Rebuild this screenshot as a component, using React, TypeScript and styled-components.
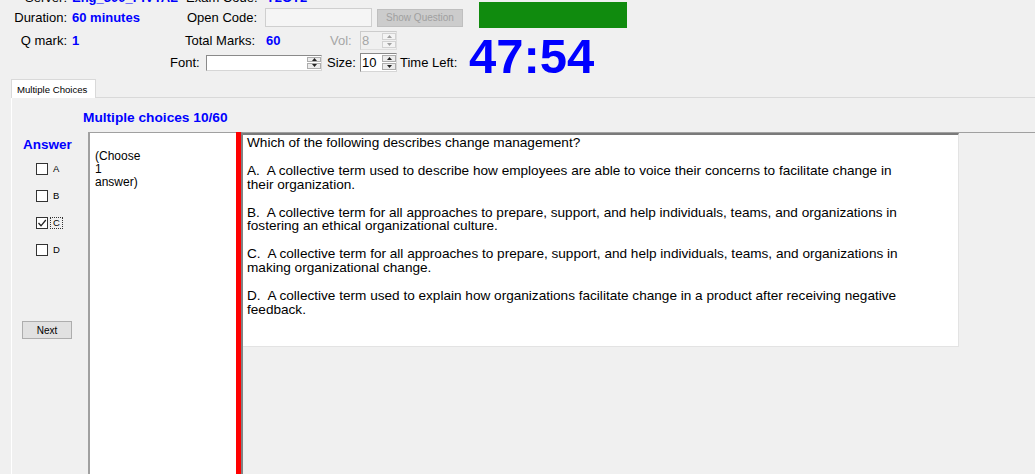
import React from "react";
import styled, { createGlobalStyle } from "styled-components";

const Global = createGlobalStyle`
  html, body { margin: 0; padding: 0; background: #f0f0f0; overflow: hidden; }
  body { font-family: "Liberation Sans", Arial, sans-serif; color: #000; }
  #root { width: 1035px; height: 474px; overflow: hidden; }
`;

const Page = styled.div`
  width: 1035px;
  height: 474px;
  display: flex;
  flex-direction: column;
  overflow: hidden;
  background: #f0f0f0;
`;

const Header = styled.header`
  margin-top: -10px;
  display: flex;
  flex-direction: column;
  flex-shrink: 0;
`;

const Row = styled.div<{ $h: number; $pl?: number }>`
  display: flex;
  align-items: center;
  height: ${(p) => p.$h}px;
  padding-left: ${(p) => p.$pl ?? 0}px;
  flex-shrink: 0;
`;

const Label = styled.span<{ $w?: number; $right?: boolean; $muted?: boolean; $ml?: number }>`
  font-size: 13px;
  white-space: nowrap;
  flex-shrink: 0;
  box-sizing: border-box;
  width: ${(p) => (p.$w ? `${p.$w}px` : "auto")};
  text-align: ${(p) => (p.$right ? "right" : "left")};
  padding-right: ${(p) => (p.$right ? 5 : 0)}px;
  margin-left: ${(p) => p.$ml ?? 0}px;
  color: ${(p) => (p.$muted ? "#a6a6a6" : "#000")};
`;

const Value = styled.span<{ $w: number }>`
  font-size: 13px;
  font-weight: bold;
  color: #0000ff;
  white-space: nowrap;
  width: ${(p) => p.$w}px;
  flex-shrink: 0;
  overflow: hidden;
`;

const TextBox = styled.div<{ $w: number; $h: number; $disabled?: boolean }>`
  width: ${(p) => p.$w}px;
  height: ${(p) => p.$h}px;
  box-sizing: border-box;
  flex-shrink: 0;
  border: 1px solid ${(p) => (p.$disabled ? "#cfcfcf" : "#7a7a7a")};
  background: ${(p) => (p.$disabled ? "#f5f5f5" : "#fff")};
`;

const FlatButton = styled.button<{ $w: number; $h: number; $disabled?: boolean }>`
  width: ${(p) => p.$w}px;
  height: ${(p) => p.$h}px;
  margin: 0 0 0 5px;
  padding: 0;
  flex-shrink: 0;
  box-sizing: border-box;
  font-family: "Liberation Sans", Arial, sans-serif;
  font-size: 10px;
  color: ${(p) => (p.$disabled ? "#a0a0a0" : "#000")};
  background: ${(p) => (p.$disabled ? "#cccccc" : "#e1e1e1")};
  border: 1px solid ${(p) => (p.$disabled ? "#bfbfbf" : "#adadad")};
`;

const StatusBar = styled.div`
  width: 148px;
  height: 26px;
  margin-left: 16px;
  align-self: flex-start;
  margin-top: -2px;
  background: #108b0e;
  flex-shrink: 0;
`;

const Spin = styled.div<{ $w: number; $h: number; $disabled?: boolean }>`
  display: flex;
  width: ${(p) => p.$w}px;
  height: ${(p) => p.$h}px;
  box-sizing: border-box;
  flex-shrink: 0;
  border: 1px solid ${(p) => (p.$disabled ? "#cccccc" : "#8a8a8a")};
  border-right-color: ${(p) => (p.$disabled ? "#dedede" : "#d6d6d6")};
  border-bottom-color: ${(p) => (p.$disabled ? "#dedede" : "#d6d6d6")};
  background: ${(p) => (p.$disabled ? "#f0f0f0" : "#fff")};
`;

const SpinText = styled.span<{ $disabled?: boolean }>`
  flex: 1;
  font-size: 13px;
  line-height: 1;
  padding-left: 1px;
  display: flex;
  align-items: center;
  color: ${(p) => (p.$disabled ? "#a6a6a6" : "#000")};
`;

const SpinButtons = styled.div`
  width: 14px;
  display: flex;
  flex-direction: column;
  gap: 1px;
  padding: 1px 0;
  box-sizing: border-box;
`;

const SpinBtn = styled.div<{ $disabled?: boolean }>`
  flex: 1;
  display: flex;
  align-items: center;
  justify-content: center;
  box-sizing: border-box;
  background: ${(p) => (p.$disabled ? "#f4f4f4" : "#ececec")};
  border: 1px solid ${(p) => (p.$disabled ? "#d2d2d2" : "#adadad")};
`;

const Timer = styled.div`
  font-size: 49px;
  font-weight: bold;
  line-height: 27px;
  color: #0000ff;
  align-self: flex-start;
  margin-top: -6px;
  white-space: nowrap;
`;

const Arrow = ({ up, color }: { up?: boolean; color: string }) => (
  <svg width="5" height="3" viewBox="0 0 5 3">
    <polygon points={up ? "0,3 5,3 2.5,0" : "0,0 5,0 2.5,3"} fill={color} />
  </svg>
);

const UpDown = ({
  w,
  h,
  value,
  disabled,
}: {
  w: number;
  h: number;
  value: string;
  disabled?: boolean;
}) => {
  const c = disabled ? "#a0a0a0" : "#222";
  return (
    <Spin $w={w} $h={h} $disabled={disabled}>
      <SpinText $disabled={disabled}>{value}</SpinText>
      <SpinButtons>
        <SpinBtn $disabled={disabled}>
          <Arrow up color={c} />
        </SpinBtn>
        <SpinBtn $disabled={disabled}>
          <Arrow color={c} />
        </SpinBtn>
      </SpinButtons>
    </Spin>
  );
};

const TabStrip = styled.div`
  display: flex;
  margin-top: 3px;
  padding-left: 11px;
  flex-shrink: 0;
`;

const Tab = styled.div`
  position: relative;
  z-index: 1;
  width: 85px;
  height: 19px;
  margin-bottom: -1px;
  box-sizing: border-box;
  border: 1px solid #d9d9d9;
  border-bottom: none;
  background: #fff;
  font-size: 9.6px;
  padding-left: 5px;
  display: flex;
  align-items: center;
  white-space: nowrap;
`;

const TabPanel = styled.section`
  flex: 1;
  margin-left: 11px;
  border-top: 1px solid #d9d9d9;
  border-left: 1px solid #fff;
  display: flex;
  flex-direction: column;
  min-height: 0;
`;

const Heading = styled.div`
  height: 34px;
  box-sizing: border-box;
  padding: 12px 0 0 71px;
  font-size: 13.7px;
  line-height: 16px;
  font-weight: bold;
  color: #0000ff;
  flex-shrink: 0;
`;

const Main = styled.div`
  flex: 1;
  display: flex;
  min-height: 0;
`;

const AnswerCol = styled.div`
  width: 76px;
  flex-shrink: 0;
  display: flex;
  flex-direction: column;
`;

const AnswerTitle = styled.div`
  padding: 5px 0 0 11px;
  font-size: 13.5px;
  line-height: 16px;
  font-weight: bold;
  color: #0000ff;
`;

const Options = styled.div`
  margin-top: 2px;
  display: flex;
  flex-direction: column;
`;

const Option = styled.div`
  height: 27px;
  display: flex;
  align-items: center;
  padding-left: 24px;
  gap: 2px;
`;

const Box = styled.span`
  width: 12px;
  height: 12px;
  box-sizing: border-box;
  border: 1px solid #333;
  background: #fff;
  display: flex;
  align-items: center;
  justify-content: center;
`;

const OptionLabel = styled.span<{ $focus?: boolean }>`
  font-size: 9.5px;
  line-height: 10px;
  padding: 0 2px;
  border: 1px dotted ${(p) => (p.$focus ? "#333" : "transparent")};
`;

const NextButton = styled.button`
  margin: 58px 0 0 10px;
  width: 50px;
  height: 18px;
  padding: 0;
  box-sizing: border-box;
  background: #e1e1e1;
  border: 1px solid #adadad;
  font-family: "Liberation Sans", Arial, sans-serif;
  font-size: 10px;
  color: #000;
`;

const Instructions = styled.div`
  width: 148px;
  flex-shrink: 0;
  box-sizing: border-box;
  background: #fff;
  border-top: 1px solid #a0a0a0;
  border-left: 2px solid #a0a0a0;
  padding: 17px 0 0 5px;
  font-size: 12px;
  line-height: 13px;
`;

const Splitter = styled.div`
  width: 5px;
  flex-shrink: 0;
  background: #ff0000;
`;

const RightPane = styled.div`
  flex: 1;
  border-left: 2px solid #828282;
  border-top: 1px solid #a0a0a0;
  display: flex;
  flex-direction: column;
  align-items: flex-start;
`;

const QuestionBox = styled.div`
  width: 716px;
  height: 214px;
  box-sizing: border-box;
  background: #fff;
  border-top: 2px solid #7a7a7a;
  border-right: 1px solid #e3e3e3;
  border-bottom: 1px solid #e3e3e3;
  padding: 1px 0 0 4px;
`;

const QuestionText = styled.div`
  width: 668px;
  font-size: 13.6px;
  line-height: 13.9px;
  white-space: pre-wrap;
`;

const Para = styled.p`
  margin: 0 0 13.9px 0;
`;

const Check = () => (
  <svg width="10" height="10" viewBox="0 0 10 10">
    <polyline points="1.5,5 4,7.8 8.8,2" fill="none" stroke="#222" strokeWidth="1.3" />
  </svg>
);

const options = ["A", "B", "C", "D"];
const paragraphs = [
  "Which of the following describes change management?",
  "A.  A collective term used to describe how employees are able to voice their concerns to facilitate change in their organization.",
  "B.  A collective term for all approaches to prepare, support, and help individuals, teams, and organizations in fostering an ethical organizational culture.",
  "C.  A collective term for all approaches to prepare, support, and help individuals, teams, and organizations in making organizational change.",
  "D.  A collective term used to explain how organizations facilitate change in a product after receiving negative feedback.",
];

export default function App() {
  return (
    <Page>
      <Global />
      <Header>
        <Row $h={14}>
          <Label $w={72} $right>
            Server:
          </Label>
          <Value $w={114}>Eng_300_PIVTAL</Value>
          <Label $w={80}>Exam Code:</Label>
          <Value $w={60}>Y2OT2</Value>
        </Row>
        <Row $h={27}>
          <Label $w={72} $right>
            Duration:
          </Label>
          <Value $w={115}>60 minutes</Value>
          <Label $w={78}>Open Code:</Label>
          <TextBox $w={107} $h={19} $disabled />
          <FlatButton $w={86} $h={18} $disabled>
            Show Question
          </FlatButton>
          <StatusBar />
        </Row>
        <Row $h={18}>
          <Label $w={72} $right>
            Q mark:
          </Label>
          <Value $w={113}>1</Value>
          <Label $w={81}>Total Marks:</Label>
          <Value $w={64}>60</Value>
          <Label $w={30} $muted>
            Vol:
          </Label>
          <UpDown w={37} h={19} value="8" disabled />
        </Row>
        <Row $h={27} $pl={170}>
          <Label $w={36}>Font:</Label>
          <UpDown w={116} h={16} value="" />
          <Label $w={33} $ml={5}>
            Size:
          </Label>
          <UpDown w={37} h={19} value="10" />
          <Label $w={69} $ml={3}>
            Time Left:
          </Label>
          <Timer>47:54</Timer>
        </Row>
      </Header>
      <TabStrip>
        <Tab>Multiple Choices</Tab>
      </TabStrip>
      <TabPanel>
        <Heading>Multiple choices 10/60</Heading>
        <Main>
          <AnswerCol>
            <AnswerTitle>Answer</AnswerTitle>
            <Options>
              {options.map((o) => (
                <Option key={o}>
                  <Box>{o === "C" && <Check />}</Box>
                  <OptionLabel $focus={o === "C"}>{o}</OptionLabel>
                </Option>
              ))}
            </Options>
            <div>
              <NextButton>Next</NextButton>
            </div>
          </AnswerCol>
          <Instructions>
            (Choose
            <br />1
            <br />
            answer)
          </Instructions>
          <Splitter />
          <RightPane>
            <QuestionBox>
              <QuestionText>
                {paragraphs.map((p, i) => (
                  <Para key={i}>{p}</Para>
                ))}
              </QuestionText>
            </QuestionBox>
          </RightPane>
        </Main>
      </TabPanel>
    </Page>
  );
}
